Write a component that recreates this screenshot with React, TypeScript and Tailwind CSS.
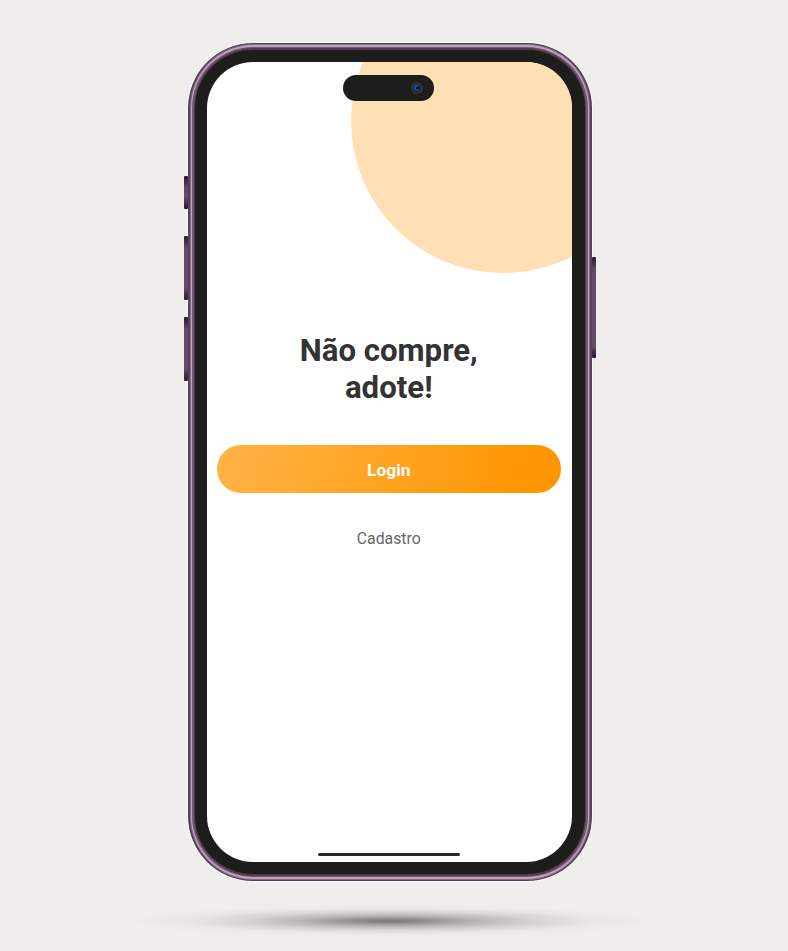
const SideButton = ({ className }: { className: string }) => (
  <div className={`relative z-10 w-[4px] rounded-[1px] bg-[linear-gradient(to_bottom,#2d1b31_0,#3c2740_4px,#65486a_12px,#65486a_calc(100%_-_12px),#3c2740_calc(100%_-_4px),#2d1b31_100%)] ${className}`} />
);

function Camera() {
  return (
    <svg className="h-[14px] w-[14px]" viewBox="0 0 14 14">
      <circle cx="7" cy="7" r="6" fill="#34363a" />
      <circle cx="7" cy="7" r="4.4" fill="#1c2634" />
      <path d="M3.5 7a3.5 3.5 0 0 1 6.4-2L7.2 5.6 5.8 7.8l1.6 1.8A3.2 3.2 0 0 1 3.5 7Z" fill="#1650a0" />
      <circle cx="7.7" cy="6.7" r="1.2" fill="#070c14" />
      <circle cx="8.2" cy="9" r=".8" fill="#2868a6" />
    </svg>
  );
}

export default function App() {
  return (
    <main className="flex h-[951px] w-[788px] flex-col items-center overflow-hidden bg-[#efeeec] pt-[42.5px] pr-[8px] font-['Roboto',sans-serif]">
      <div className="flex h-[838.5px]">
        <div className="flex flex-col pt-[133px]">
          <SideButton className="h-[33px]" />
          <SideButton className="mt-[27px] h-[64px]" />
          <SideButton className="mt-[17px] h-[64px]" />
        </div>
        <div className="h-full w-[403.5px] rounded-[65px] bg-[#573e5a] p-[1.5px] shadow-[0_0_0_1px_rgba(255,255,255,0.7)]">
          <div className="h-full rounded-[63.5px] bg-[#876f87] p-[1px]">
            <div className="h-full rounded-[62.5px] bg-[#b9a7b9] p-[1.5px]">
              <div className="h-full rounded-[61px] bg-[#735774] p-[1.5px]">
                <div className="h-full rounded-[59.5px] bg-[#55384f] p-[1.5px]">
                  <div className="h-full rounded-[58px] bg-[#1d1e1b] p-[12px] pr-[12.5px]">
                    <div className="relative flex h-full flex-col items-center overflow-hidden rounded-[46px] bg-white pr-[2px]">
                      <div className="absolute -top-[92.5px] left-[144px] size-[304px] rounded-full bg-[#ffdfb3]" />
                      <div className="relative mt-[13px] mr-[1px] flex h-[26.5px] w-[90.5px] items-center justify-end rounded-full bg-[#1d1e1b] pr-[10px]">
                        <Camera />
                      </div>
                      <h1 className="mt-[230.5px] text-center text-[31.2px] leading-[37px] font-bold text-[#333]">
                        Não compre,<br />adote!
                      </h1>
                      <button className="mt-[39px] flex h-[48px] w-[344px] shrink-0 items-center justify-center rounded-full bg-[linear-gradient(105deg,#ffb347_0%,#ff9500_92%)] pt-[3px] text-[17.4px] font-bold text-white">
                        Login
                      </button>
                      <button className="mt-[34px] text-[15.8px] leading-[24px] text-[#666]">Cadastro</button>
                      <div className="mt-auto mb-[6px] h-[3.5px] w-[142px] rounded-full bg-[#292929]" />
                    </div>
                  </div>
                </div>
              </div>
            </div>
          </div>
        </div>
        <div className="pt-[214px]">
          <SideButton className="h-[101px]" />
        </div>
      </div>
      <div className="mt-[24px] h-[32px] w-[530px] bg-[radial-gradient(ellipse_50%_50%_at_50%_50%,#777676_0%,#939291_15%,#b7b6b5_33%,#d5d4d3_55%,#e9e8e6_78%,#efeeec_100%)]" />
    </main>
  );
}
